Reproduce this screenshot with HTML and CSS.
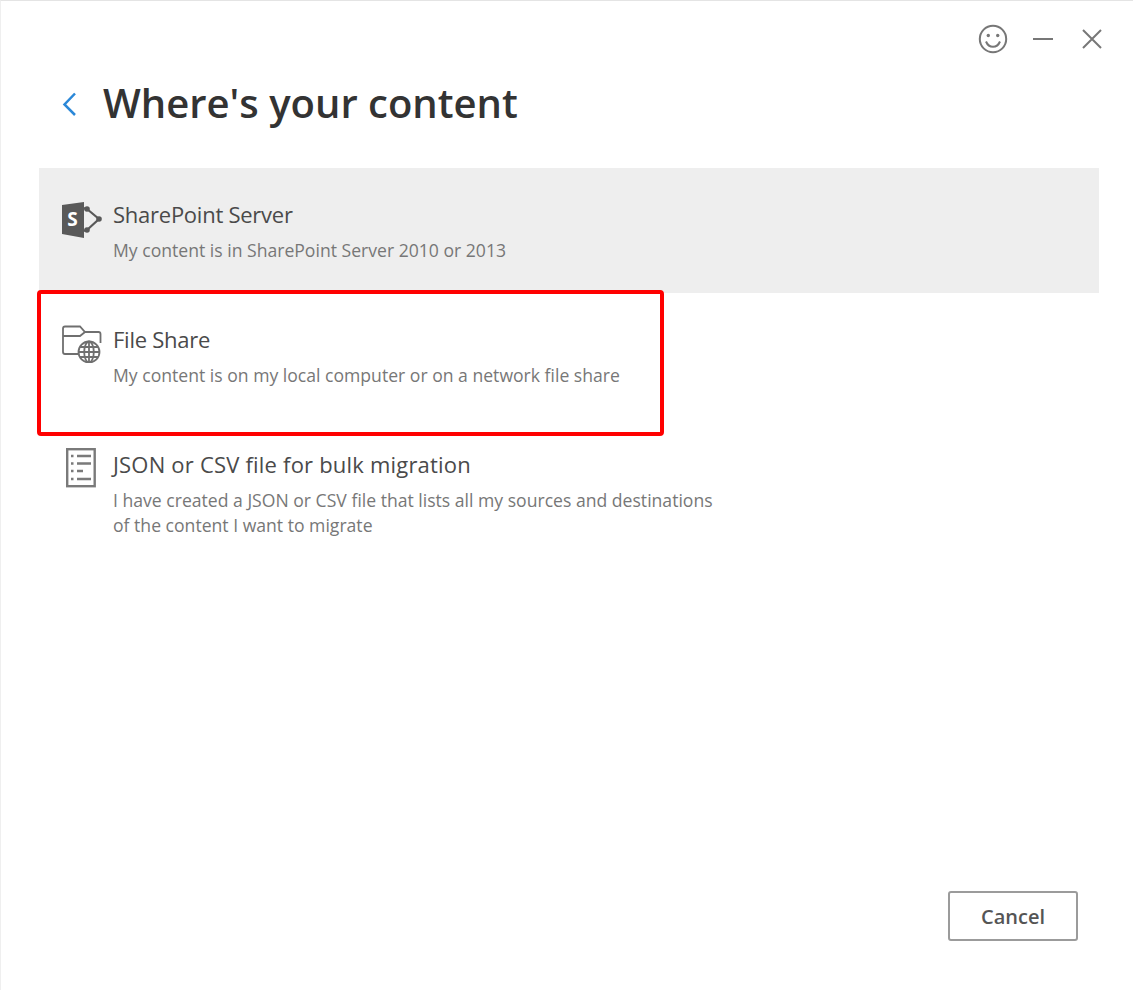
FILE: index.html
```html
<!DOCTYPE html>
<html lang="en">
<head>
<meta charset="utf-8">
<title>Where's your content</title>
<link rel="stylesheet" href="styles.css">
</head>
<body>
<div class="window">
  <div class="topbar">
    <svg class="icon-smile" viewBox="0 0 30 30" width="30" height="30"><circle cx="15" cy="15" r="13.2"/><circle class="fill" cx="10.3" cy="11.5" r="1.7"/><circle class="fill" cx="19.7" cy="11.5" r="1.7"/><path d="M8 17.5c1.5 3.6 4 5.3 7 5.3s5.500-1.700 7-5.300"/></svg>
    <svg class="icon-min" viewBox="0 0 20 4" width="20" height="4"><path d="M0 2h20"/></svg>
    <svg class="icon-close" viewBox="0 0 20 20" width="20" height="20"><path d="M1 1l18 18M19 1L1 19"/></svg>
  </div>
  <div class="heading">
    <svg class="icon-back" viewBox="0 0 15 24" width="15" height="24"><path d="M13 1.500L2.500 12.500 13 23"/></svg>
    <h1 class="title">Where's your content</h1>
  </div>
  <div class="list">
    <div class="item item-selected">
      <svg class="item-icon icon-sp" viewBox="0 0 40 40" width="40" height="40">
        <path class="solid" d="M0 5L22 2V38L0 34z"/>
        <path class="line-thick" d="M22 8l2 1M25 9L37 19 25 30M22 31l2-1"/>
        <circle class="solid" cx="25" cy="9" r="2.800"/><circle class="solid" cx="37" cy="19" r="2.800"/><circle class="solid" cx="25" cy="30" r="2.800"/>
        <text class="logo-s" x="10.500" y="26" text-anchor="middle">S</text>
      </svg>
      <div class="item-text">
        <div class="item-title">SharePoint Server</div>
        <div class="item-desc">My content is in SharePoint Server 2010 or 2013</div>
      </div>
    </div>
    <div class="item">
      <svg class="item-icon icon-folder" viewBox="0 0 40 38" width="40" height="38">
        <path class="line" d="M16 29H3Q1 29 1 27V3.500Q1 1.500 3 1.500H18l5 5.500h13.500Q38.500 7 38.500 9v9"/>
        <path class="line" d="M1 11H18l5-4"/>
        <circle class="line" cx="27" cy="27" r="10.500"/>
        <ellipse class="line" cx="27" cy="27" rx="4.800" ry="10.500"/>
        <path class="line" d="M27 16.500v21M16.500 27h21M18 22h18M18 32h18"/>
      </svg>
      <div class="item-text">
        <div class="item-title">File Share</div>
        <div class="item-desc">My content is on my local computer or on a network file share</div>
      </div>
    </div>
    <div class="item">
      <svg class="item-icon icon-doc" viewBox="0 0 30 40" width="30" height="40">
        <rect class="line-doc" x="1.200" y="1.200" width="27.500" height="37"/>
        <path class="line-doc" d="M5 8h2.500M11 8h14M5 15.500h2.500M11 15.500h14M5 23h2.500M11 23h6M5 31h2.500M11 31h14"/>
      </svg>
      <div class="item-text">
        <div class="item-title item-title-wide">JSON or CSV file for bulk migration</div>
        <div class="item-desc">I have created a JSON or CSV file that lists all my sources and destinations of the content I want to migrate</div>
      </div>
    </div>
    <div class="highlight"></div>
  </div>
  <div class="footer">
    <button class="btn" type="button">Cancel</button>
  </div>
</div>
</body>
</html>
```
FILE: styles.css
```css
* { box-sizing: border-box; }
html, body { margin: 0; padding: 0; height: 100%; background: #fff; }
body { font-family: "Open Sans", "Noto Sans", sans-serif; color: #333; overflow: hidden; }
.window { height: 990px; width: 1133px; border-top: 1px solid #e4e4e4; border-left: 1px solid #efefef; display: flex; flex-direction: column; }
.topbar { display: flex; align-items: center; justify-content: flex-end; padding: 23px 31px 0 0; height: 52px; }
.topbar svg { fill: none; stroke: #777; stroke-width: 2; }
.topbar .fill { fill: #777; stroke: none; }
.icon-min { margin-left: 25px; }
.icon-close { margin-left: 29px; }
.heading { display: flex; align-items: center; height: 78px; padding-left: 61px; margin-top: 11px; }
.icon-back { fill: none; stroke: #2b88d8; stroke-width: 2.500; margin-right: 26px; margin-top: 2px; }
.title { margin: 0; font-size: 40px; font-weight: 600; line-height: 52px; color: #333; }
.list { position: relative; margin: 26px 34px 0 38px; display: flex; flex-direction: column; }
.item { height: 125px; display: flex; padding: 30px 0 0 23px; }
.item-selected { background: #eeeeee; }
.item-icon { flex: none; }
.icon-sp { margin-right: 11px; margin-top: 2px; }
.icon-folder { margin-right: 11px; margin-top: 2px; }
.icon-doc { margin-left: 4px; margin-right: 17px; }
.solid { fill: #595959; }
.line { fill: none; stroke: #6f6f6f; stroke-width: 1.800; }
.line-thick { fill: none; stroke: #595959; stroke-width: 2.200; }
.line-doc { fill: none; stroke: #7a7a7a; stroke-width: 2.400; }
.logo-s { font-family: "Open Sans", sans-serif; font-weight: 700; font-size: 19px; fill: #fff; }
.item-text { width: 608px; }
.item-title { font-size: 22px; line-height: 32px; color: #4a4a4a; letter-spacing: -0.25px; }
.item-title-wide { letter-spacing: 0.2px; }
.item-desc { font-size: 17.600px; line-height: 25px; margin-top: 8px; color: #777; }
.highlight { position: absolute; left: -2px; top: 122px; width: 627px; height: 146px; border: 4px solid #ff0000; border-radius: 4px; }
.footer { margin-top: auto; display: flex; justify-content: flex-end; padding: 0 55px 49px 0; }
.btn { width: 130px; height: 50px; background: #fff; border: 2px solid #9b9b9b; border-radius: 3px; font-family: inherit; font-size: 20px; font-weight: 600; color: #555; }
```
